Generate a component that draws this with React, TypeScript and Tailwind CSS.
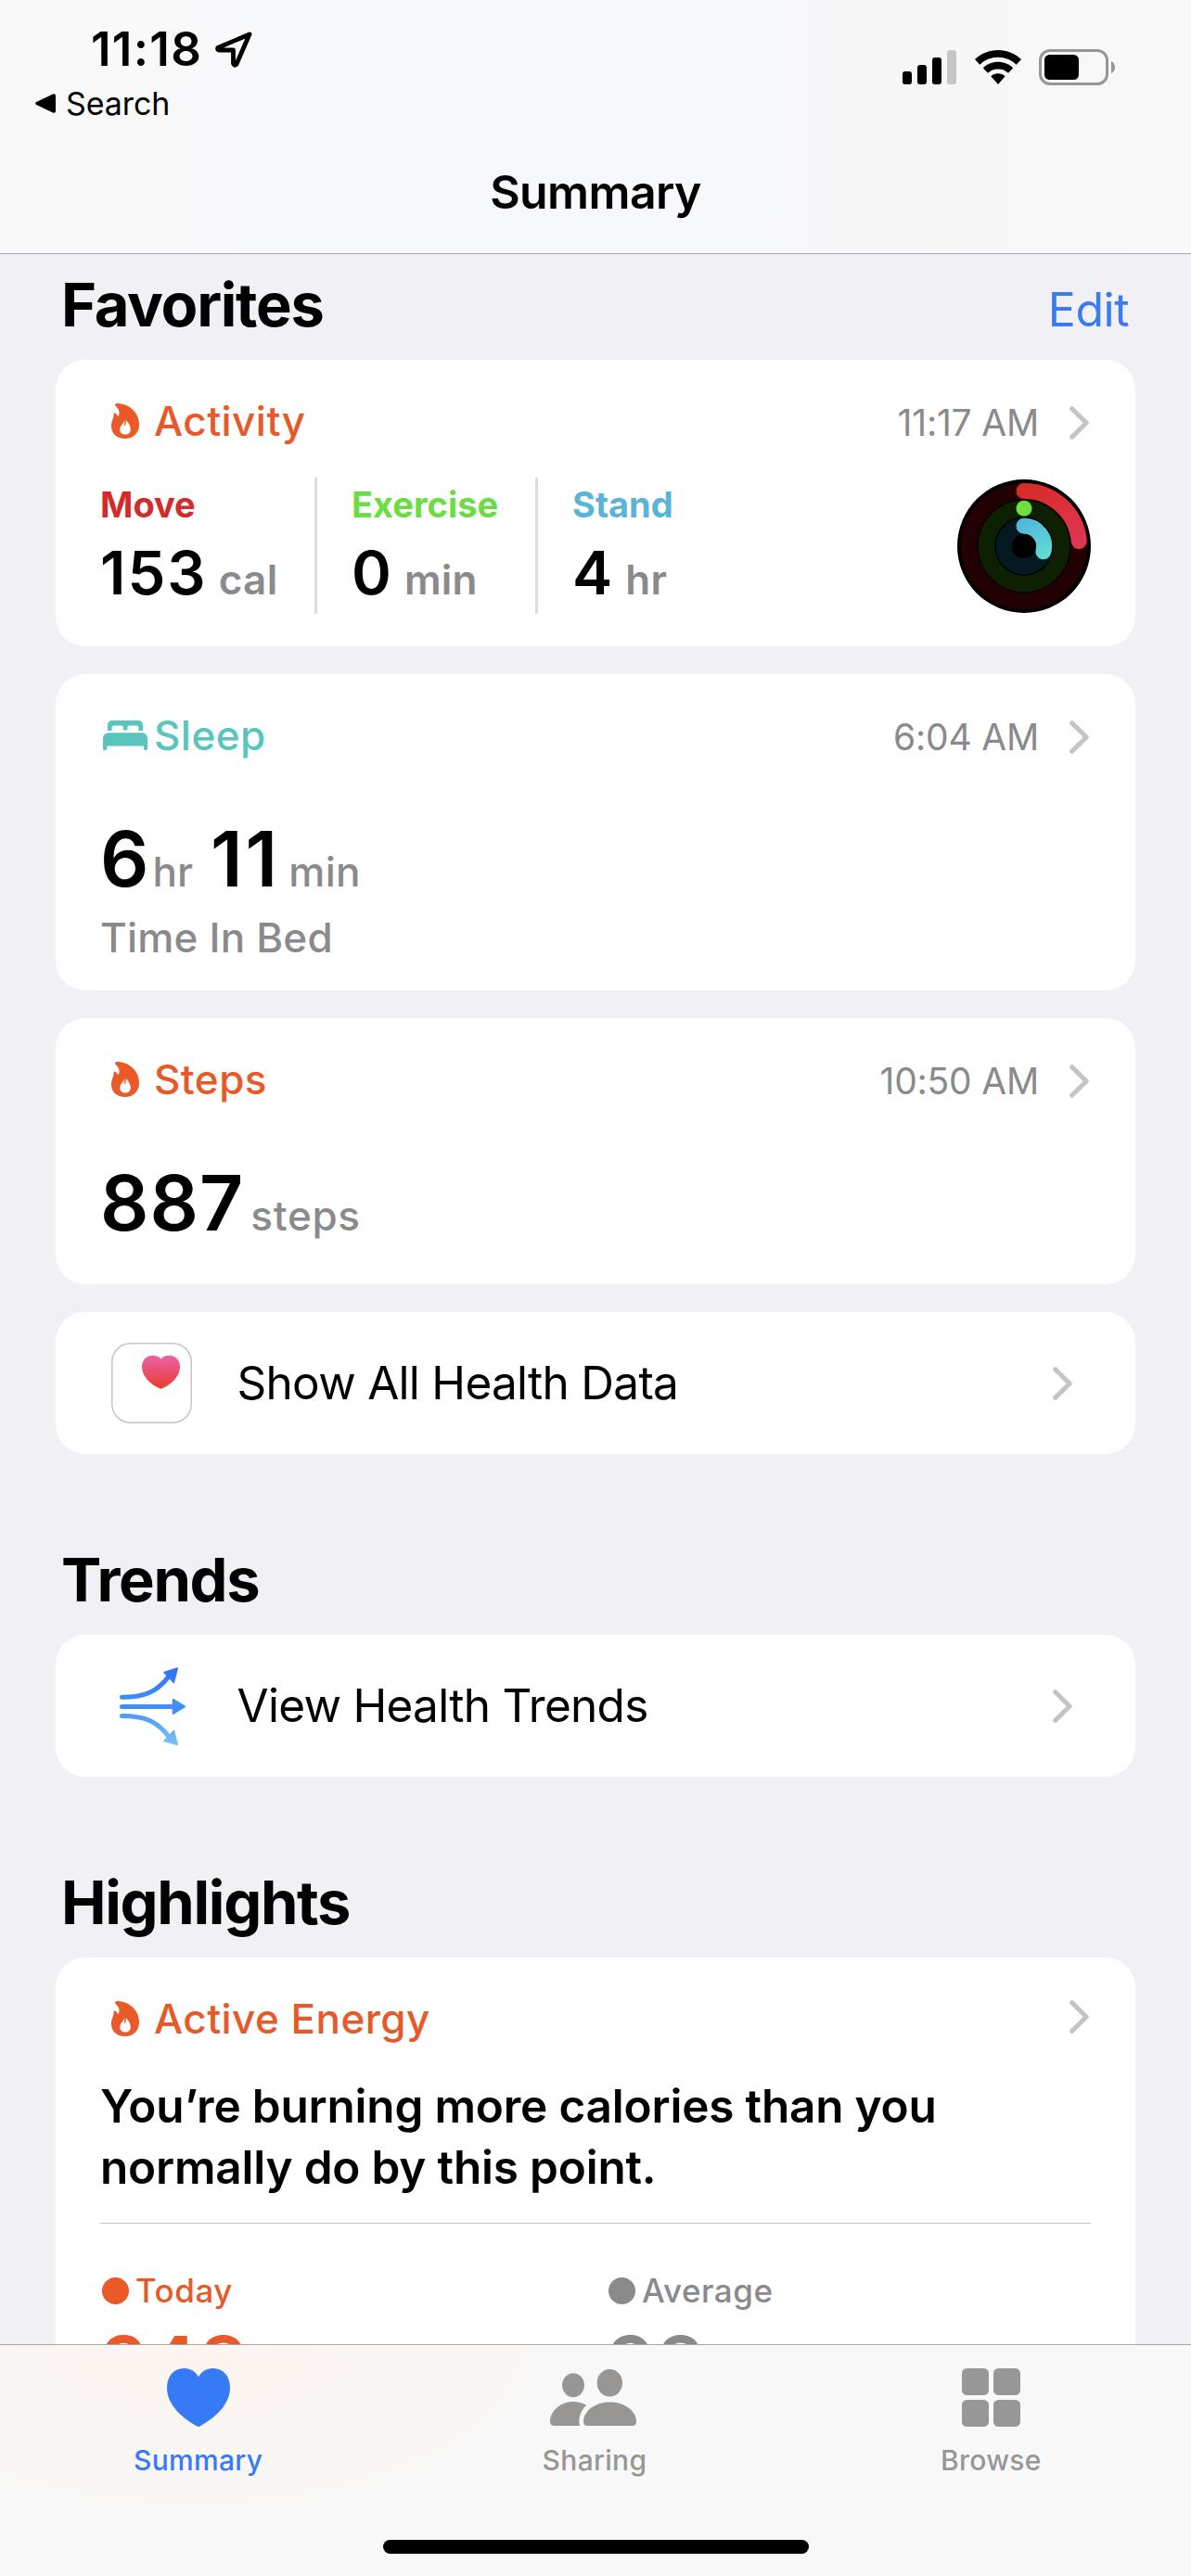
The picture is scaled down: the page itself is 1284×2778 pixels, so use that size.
import type { ReactNode } from "react";

const FlameIcon = () => (
  <svg width="30" height="38" viewBox="0 0 30 38" fill="#ea5a28">
    <path
      fillRule="evenodd"
      d="M4 1.6C4.3.5 5.4 0 7 0C20 .6 30 10.500 30 22.500C30 32 24 38 14.800 38C5.800 38 0 32.500 0 24.500C0 19 2.600 16.500 2.600 11.800C2.600 10.300 3.800 10 4.800 10.900C6 11.900 6.800 13 7.400 14.300C9.800 10.500 8.500 6.500 4.600 3C4.100 2.600 3.900 2.100 4 1.600ZM14.600 17.200C14.300 21 9.200 23.500 9.200 28.300C9.200 31.500 11.600 33.600 15 33.600C18.600 33.600 20.800 31.300 20.800 28C20.800 24.500 18.800 21.300 16 18.200C15.700 20.800 15.600 22.500 14.800 24.600C13.300 22.500 14.400 20 14.600 17.200Z"
    />
  </svg>
);

const BedIcon = () => (
  <svg width="48" height="32" viewBox="0 0 48 32" fill="#5ac5bd">
    <path d="M5 11V5C5 2 7 0 10 0H38C41 0 43 2 43 5V11H38.500V8C38.500 6.500 37.500 5.600 36 5.600H28.500C27 5.600 26.300 6.500 26.300 8V10.500H22V8C22 6.500 21.200 5.600 19.700 5.600H12C10.500 5.600 9.600 6.500 9.600 8V11Z" />
    <path d="M0 19.500C0 15.500 2.500 13.200 6.500 13.200H41.500C45.500 13.200 48 15.500 48 19.500V30.500C48 31.500 47.200 32 46 32C44.800 32 44 31.500 44 30.500V27.400H4.300V30.500C4.300 31.500 3.500 32 2.200 32C.8 32 0 31.500 0 30.500Z" />
  </svg>
);

const Chevron = () => (
  <svg width="21" height="36" viewBox="0 0 21 36" fill="none" className="shrink-0">
    <path
      d="M2.700 2.700L18.200 18L2.700 33.300"
      stroke="#c4c4c6"
      strokeWidth="5"
      strokeLinecap="round"
      strokeLinejoin="round"
    />
  </svg>
);

const ActivityRings = () => (
  <svg width="144" height="144" viewBox="-72 -72 144 144" fill="none">
    <defs>
      <linearGradient id="move" x1="0" y1="-68" x2="50" y2="0" gradientUnits="userSpaceOnUse">
        <stop stopColor="#d62c26" />
        <stop offset="1" stopColor="#de3550" />
      </linearGradient>
      <linearGradient id="stand" x1="0" y1="-30" x2="20" y2="12" gradientUnits="userSpaceOnUse">
        <stop stopColor="#51b4dc" />
        <stop offset="1" stopColor="#5fdcd2" />
      </linearGradient>
    </defs>
    <circle r="72" fill="#000" />
    <circle r="59.200" stroke="#220003" strokeWidth="17.800" />
    <circle r="40.500" stroke="#0d2002" strokeWidth="17.600" />
    <circle r="21.700" stroke="#041920" strokeWidth="17.400" />
    <path d="M0 -59.500A59.500 59.500 0 0 1 59.300 -5.400" stroke="url(#move)" strokeWidth="17" strokeLinecap="round" />
    <circle cy="-40.700" r="8.500" fill="#6fde41" />
    <path d="M0 -21.700A21.700 21.700 0 0 1 20.900 5.800" stroke="url(#stand)" strokeWidth="17" strokeLinecap="round" />
  </svg>
);

const HealthIcon = () => (
  <svg width="87" height="87" viewBox="0 0 87 87">
    <defs>
      <linearGradient id="heart" x1="0" y1="14" x2="0" y2="50" gradientUnits="userSpaceOnUse">
        <stop stopColor="#ea62a8" />
        <stop offset="1" stopColor="#e93c2c" />
      </linearGradient>
    </defs>
    <rect x=".75" y=".75" width="85.500" height="85.500" rx="20" fill="#fff" stroke="#c6c6c8" strokeWidth="1.500" />
    <path
      fill="url(#heart)"
      d="M53.500 17.500C55.500 15 58.800 13.800 62.300 13.800C69.500 13.800 74 19 74 26C74 37 64 45 55 49.300C54 49.800 53 49.800 52 49.300C43 45 33 37 33 26C33 19 37.500 13.800 44.700 13.800C48.200 13.800 51.500 15 53.500 17.500Z"
    />
  </svg>
);

const TrendsIcon = () => (
  <svg width="87" height="86" viewBox="-8 0 87 86" fill="none">
    <defs>
      <linearGradient id="trend" x1="0" y1="0" x2="0" y2="86" gradientUnits="userSpaceOnUse">
        <stop stopColor="#2f74f3" />
        <stop offset=".5" stopColor="#4091f7" />
        <stop offset="1" stopColor="#7cc3f5" />
      </linearGradient>
    </defs>
    <g stroke="url(#trend)" strokeWidth="5" strokeLinecap="round">
      <path d="M3.500 33.300C29 33.300 42 27 54.500 10" />
      <path d="M3.500 43.400L60 43.410" stroke="#4091f7" />
      <path d="M3.500 53.500C29 53.500 42 60 54.500 76.500" />
    </g>
    <g fill="url(#trend)" stroke="url(#trend)" strokeWidth="1.500" strokeLinejoin="round">
      <path d="M63.300 2L49 6.500L59.300 17.500Z" />
      <path d="M71.500 43.400L58.500 35.500V51.300Z" fill="#4091f7" stroke="#4091f7" />
      <path d="M63.300 84.500L49 80.500L59.300 69.500Z" />
    </g>
  </svg>
);

const StatusIcons = () => (
  <div className="mt-[53px] flex h-[39px] items-center">
    <svg width="58" height="37" viewBox="0 0 58 37">
      <rect y="23" width="10" height="14" rx="3" />
      <rect x="16" y="16" width="10" height="21" rx="3" />
      <rect x="32" y="8" width="10" height="29" rx="3" />
      <rect x="48" width="10" height="37" rx="3" fill="#c6c6c6" />
    </svg>
    <svg width="50" height="37" viewBox="0 0 50 37" className="ml-5">
      <path d="M25 0C34.500 0 43.300 3.700 50 10L44.700 15.700C39.500 10.700 32.600 7.800 25 7.800S10.500 10.700 5.300 15.700L0 10C6.700 3.700 15.500 0 25 0Z" />
      <path d="M25 12.800C31.200 12.800 36.900 15.200 41.200 19.200L36 24.700C33.100 22 29.300 20.500 25 20.500S16.900 22 14 24.700L8.800 19.200C13.100 15.200 18.800 12.800 25 12.800Z" />
      <path d="M25 25.300C28 25.300 30.700 26.400 32.700 28.300L25 37L17.300 28.300C19.300 26.400 22 25.300 25 25.300Z" />
    </svg>
    <svg width="82" height="39" viewBox="0 0 82 39" className="ml-[19px]">
      <rect x="1.500" y="1.500" width="72" height="36" rx="10.500" fill="none" stroke="#969696" strokeWidth="3" />
      <rect x="6" y="6" width="37" height="27" rx="5.500" />
      <path d="M78 13C80.600 14.200 82 16.600 82 19.500S80.600 24.800 78 26Z" fill="#969696" />
    </svg>
  </div>
);

const HeartTab = () => (
  <svg width="68" height="63" viewBox="0 0 68 63" fill="#367af6">
    <path d="M34 9.500C37 3.500 42.500 0 49.500 0C60.500 0 68 8.500 68 21C68 38 54 52 36 62.300C34.500 63.200 33.500 63.200 32 62.300C14 52 0 38 0 21C0 8.500 7.500 0 18.500 0C25.500 0 31 3.500 34 9.500Z" />
  </svg>
);

const PeopleTab = () => (
  <svg width="93" height="61" viewBox="0 0 93 61" fill="#979694" className="mr-[2px]">
    <ellipse cx="25" cy="17.200" rx="11.900" ry="13" />
    <path d="M32 61H4.500C1.500 61 0 59.500 0 56.500C0 45.500 11 35 25 35C30.500 35 35 36.300 39.300 38.800C33.500 44 30 52 32 61Z" />
    <ellipse cx="64.300" cy="14.700" rx="13.700" ry="14.800" />
    <path d="M40.500 61C37.500 61 36 59.500 36 56.500C36 46 47.500 35.500 64.500 35.500S93 46 93 56.500C93 59.500 91.500 61 88.500 61Z" />
  </svg>
);

const GridTab = () => (
  <svg width="63" height="63" viewBox="0 0 63 63" fill="#979797">
    <rect width="29" height="29" rx="5.500" />
    <rect x="34" width="29" height="29" rx="5.500" />
    <rect y="34" width="29" height="29" rx="5.500" />
    <rect x="34" y="34" width="29" height="29" rx="5.500" />
  </svg>
);

interface SectionTitleProps {
  title: string;
  className?: string;
  children?: ReactNode;
}

function SectionTitle({ title, className = "", children }: SectionTitleProps) {
  return (
    <div className={`mb-[5px] flex h-[109px] items-center justify-between pr-[67px] pl-[66px] ${className}`}>
      <h2 className="text-[65px] font-bold tracking-[-1.300px] text-black">{title}</h2>
      {children}
    </div>
  );
}

interface CardProps {
  icon: ReactNode;
  title: string;
  color: string;
  time?: string;
  className: string;
  children: ReactNode;
}

function Card({ icon, title, color, time, className, children }: CardProps) {
  return (
    <section className={`mx-[60px] rounded-[32px] bg-white px-12 ${className}`}>
      <div className="flex h-[127px] items-center pt-[5px]">
        <div className="flex w-[54px] justify-center">{icon}</div>
        <h3 className={`ml-1 text-[44px] font-medium tracking-[0.450px] ${color}`}>{title}</h3>
        <span className="mt-1 ml-auto text-[39px] tracking-[-0.200px] text-[#8a8a8c]">{time}</span>
        <div className={`mr-[2px] ml-[33px] ${time ? "mt-1" : "-mt-1"}`}>
          <Chevron />
        </div>
      </div>
      {children}
    </section>
  );
}

const stats = [
  { label: "Move", value: "153", unit: "cal", color: "text-[#d02c2c]", box: "w-[234px] border-r-[3px]" },
  { label: "Exercise", value: "0", unit: "min", color: "text-[#6bdc42]", box: "w-[238px] border-r-[3px] pl-[37px]" },
  { label: "Stand", value: "4", unit: "hr", color: "text-[#5ab4d8]", box: "pl-[37px]" },
];

const tabs = [
  { label: "Summary", icon: <HeartTab />, color: "text-[#367af6]" },
  { label: "Sharing", icon: <PeopleTab />, color: "text-[#979694]" },
  { label: "Browse", icon: <GridTab />, color: "text-[#979797]" },
];

function LinkRow({ icon, label }: { icon: ReactNode; label: string }) {
  return (
    <div className="mx-[60px] flex h-[153px] items-center rounded-[32px] bg-white pr-[68px] pl-[60px]">
      {icon}
      <span className="ml-[48.500px] text-[49.500px] tracking-[-0.720px] text-black">{label}</span>
      <div className="ml-auto">
        <Chevron />
      </div>
    </div>
  );
}

export default function App() {
  return (
    <div className="flex h-[2778px] w-[1284px] flex-col overflow-hidden bg-[#f1f0f5] font-['Inter',sans-serif]">
      <header className="h-[274px] shrink-0 border-b border-[#a9a9ae] bg-[linear-gradient(90deg,#f9f9f9,#f7f8fb_40%,#f7f8fb_55%,#f7f7f7_80%,#f9f9f9)]">
        <div className="flex h-[138px] items-start justify-between pr-[82px] pl-[38px]">
          <div className="pt-[22px]">
            <div className="flex h-[62px] items-center pl-[60px]">
              <span className="w-[134px] text-[51px] font-semibold tracking-[1.300px]">11:18</span>
              <svg width="40" height="39" viewBox="0 0 40 39" fill="none" stroke="#000" strokeWidth="4.800" strokeLinejoin="round">
                <path d="M37 3L2.800 17.500Q2 20 4.500 20H19.500V34.500Q20.500 37.500 22.800 35.500Z" />
              </svg>
            </div>
            <div className="flex h-[54px] items-center">
              <svg width="22" height="21" viewBox="0 0 22 21">
                <path d="M1.200 9L19 .5Q22 -.5 22 2.500V18.500Q22 21.500 19 20.500L1.200 12Q-1 10.500 1.200 9Z" />
              </svg>
              <span className="ml-[11px] text-[34px] tracking-[-0.100px]">Search</span>
            </div>
          </div>
          <StatusIcons />
        </div>
        <h1 className="pt-[38px] text-center text-[50px] leading-[62px] font-semibold tracking-[-0.600px]">Summary</h1>
      </header>

      <main className="min-h-0 flex-1 overflow-hidden">
        <SectionTitle title="Favorites">
          <span className="mt-[11px] text-[50px] tracking-[-0.500px] text-[#3a7cf0]">Edit</span>
        </SectionTitle>

        <div className="flex flex-col gap-[30px]">
          <Card icon={<FlameIcon />} title="Activity" color="text-[#e65a2a]" time="11:17 AM" className="h-[309px]">
            <div className="flex h-[147px]">
              {stats.map((s) => (
                <div key={s.label} className={`border-[#dcdcdc] ${s.box}`}>
                  <div className={`text-[38px] leading-[59px] font-bold ${s.color}`}>{s.label}</div>
                  <div className="flex items-baseline gap-3 leading-[87px]">
                    <span className="text-[65px] font-semibold tracking-[2px] text-black">{s.value}</span>
                    <span className="text-[44px] font-semibold tracking-[0.300px] text-[#8a8a8c]">{s.unit}</span>
                  </div>
                </div>
              ))}
              <div className="mt-[2px] ml-auto">
                <ActivityRings />
              </div>
            </div>
          </Card>

          <Card icon={<BedIcon />} title="Sleep" color="text-[#5ac5bd]" time="6:04 AM" className="h-[341px]">
            <div className="mt-[29px] flex h-[88px] items-baseline leading-[88px]">
              <span className="text-[82px] font-semibold">6</span>
              <span className="ml-1 text-[44px] font-medium text-[#8a8a8c]">hr</span>
              <span className="ml-[19px] text-[82px] font-semibold tracking-[3px]">11</span>
              <span className="ml-[9px] text-[44px] font-medium tracking-[0.300px] text-[#8a8a8c]">min</span>
            </div>
            <div className="text-[44px] leading-[81px] font-medium tracking-[0.200px] text-[#8a8a8c]">Time In Bed</div>
          </Card>

          <Card icon={<FlameIcon />} title="Steps" color="text-[#e65a2a]" time="10:50 AM" className="h-[287px]">
            <div className="mt-[29px] flex h-[88px] items-baseline leading-[88px]">
              <span className="text-[82px] font-semibold tracking-[1px]">887</span>
              <span className="ml-[7px] text-[44px] font-medium tracking-[0.700px] text-[#8a8a8c]">steps</span>
            </div>
          </Card>

          <LinkRow icon={<HealthIcon />} label="Show All Health Data" />
        </div>

        <SectionTitle title="Trends" className="mt-[81px]" />
        <LinkRow icon={<TrendsIcon />} label="View Health Trends" />

        <SectionTitle title="Highlights" className="mt-[81px]" />
        <Card icon={<FlameIcon />} title="Active Energy" color="text-[#e65a2a]" className="h-[520px]">
          <p className="text-[49.500px] leading-[66px] font-semibold tracking-[-0.200px] text-black">
            You’re burning more calories than you
            <br />
            normally do by this point.
          </p>
          <div className="mt-[27px] h-px bg-[#c4c4c6]" />
          <div className="mt-[47px] grid grid-cols-[546px_1fr]">
            <div className="text-[#e65a2a]">
              <div className="flex items-center text-[35px] leading-[50px] font-medium tracking-[0.500px]">
                <span className="mr-[7px] ml-[2px] size-[29px] rounded-full bg-[#ea5a28]" />
                Today
              </div>
              <div className="mt-[11px] text-[82px] leading-[88px] font-semibold tracking-[1px] text-[#ea5a28]">248</div>
            </div>
            <div className="text-[#8a8a8c]">
              <div className="flex items-center text-[35px] leading-[50px] font-medium tracking-[0.500px]">
                <span className="mr-[7px] ml-[2px] size-[29px] rounded-full bg-[#8a8a8c]" />
                Average
              </div>
              <div className="mt-[11px] text-[82px] leading-[88px] font-semibold tracking-[1px]">98</div>
            </div>
          </div>
        </Card>
      </main>

      <nav className="flex h-[250px] shrink-0 flex-col border-t border-[#a9a9ab] bg-[#f8f8f8] bg-[radial-gradient(ellipse_420px_200px_at_210px_0px,#fcf4ef,#f8f7f600)]">
        <div className="grid grid-cols-3 pt-[25px] pr-[2px]">
          {tabs.map((tab) => (
            <div key={tab.label} className={`flex flex-col items-center ${tab.color}`}>
              <div className="flex h-[63px] items-center">{tab.icon}</div>
              <span className="mt-4 text-[30px] leading-[40px] font-medium tracking-[0.300px]">{tab.label}</span>
            </div>
          ))}
        </div>
        <div className="mx-auto mt-auto mb-6 h-[15px] w-[459px] rounded-full bg-black" />
      </nav>
    </div>
  );
}
